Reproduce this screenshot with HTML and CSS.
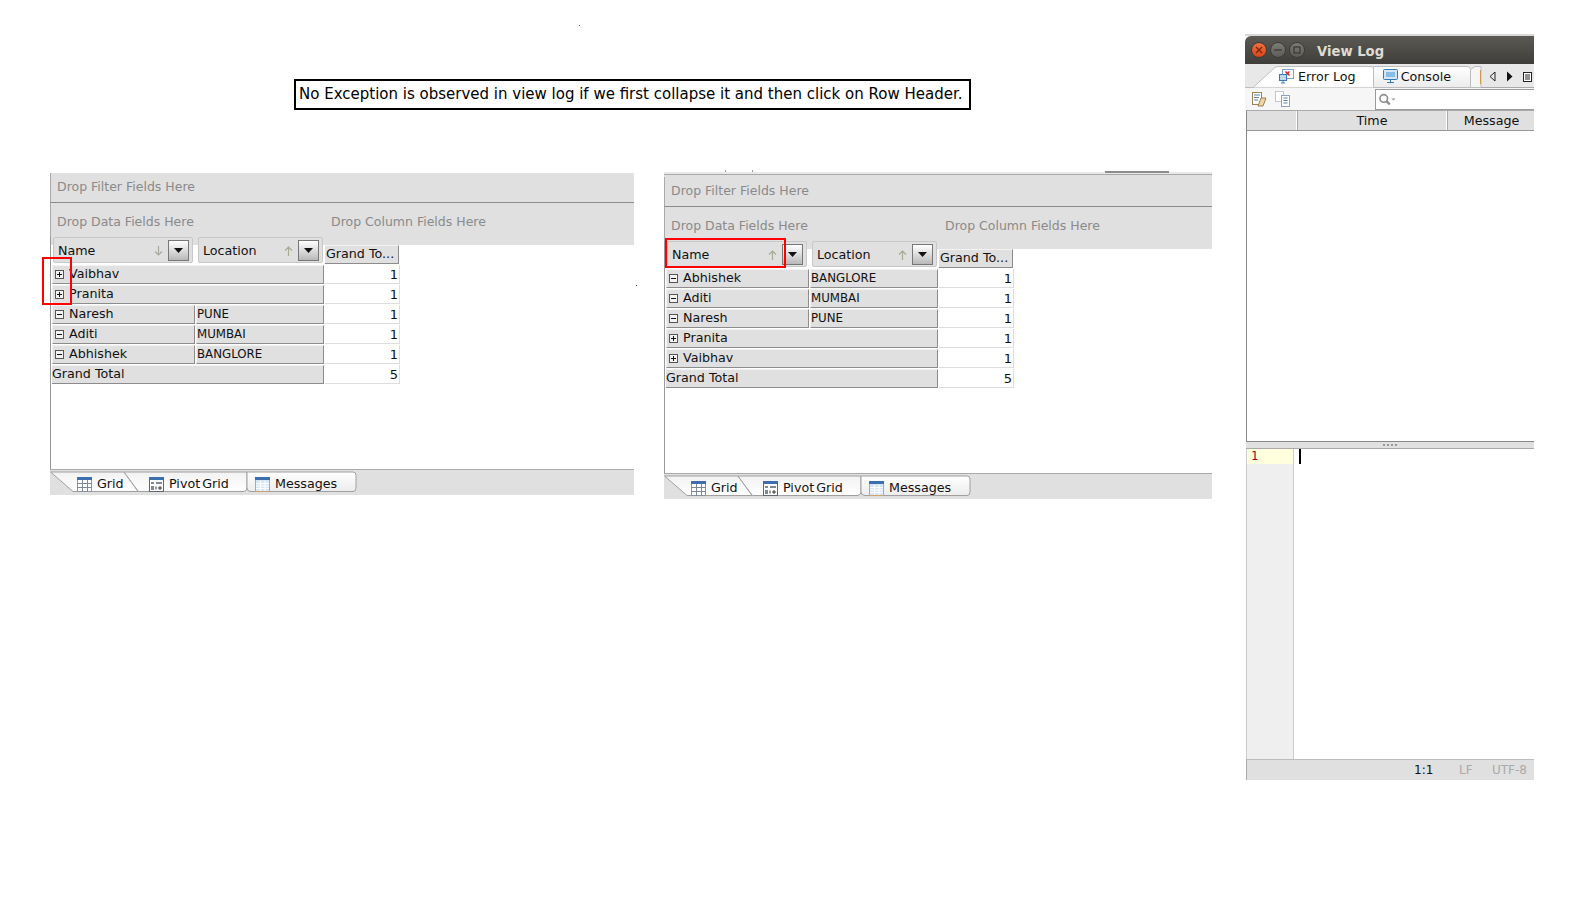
FILE: index.html
```html
<!DOCTYPE html>
<html lang="en">
<head>
<meta charset="utf-8">
<title>Pivot Grid collapse and View Log</title>
<link rel="stylesheet" href="styles.css">
</head>
<body>
<svg class="defs" width="0" height="0" aria-hidden="true">
  <defs>
    <linearGradient id="tabfill" x1="0" y1="0" x2="0" y2="1"><stop offset="0" stop-color="#f2f2f2"/><stop offset="1" stop-color="#ffffff"/></linearGradient>
    <linearGradient id="tabfill2" x1="0" y1="0" x2="0" y2="1"><stop offset="0" stop-color="#ffffff"/><stop offset="1" stop-color="#ececec"/></linearGradient>
    <symbol id="i-grid" viewBox="0 0 15 15">
      <rect x=".5" y=".5" width="14" height="14" fill="#fff" stroke="#8a94a6"/>
      <rect x="0" y="0" width="15" height="3" fill="#3d6fb0"/>
      <path d="M5.500 3v12M10.500 3v12M0 6.500h15M0 10.500h15" stroke="#7f8794" fill="none"/>
    </symbol>
    <symbol id="i-pivot" viewBox="0 0 15 15">
      <rect x=".5" y=".5" width="14" height="14" fill="#fff" stroke="#5f6774"/>
      <rect x="0" y="0" width="15" height="3" fill="#3d6fb0"/>
      <path d="M2 5h3v2H2zM2 9h3v4H2zM7 5h6v2H7z" fill="#7f8897"/>
      <path d="M9 11h4M11 9v4M7 9.500v3" stroke="#333" fill="none"/>
    </symbol>
    <symbol id="i-msg" viewBox="0 0 15 15">
      <rect x=".5" y=".5" width="14" height="14" fill="#d6e6f7" stroke="#d0a070"/>
      <rect x="0" y="0" width="15" height="3" fill="#3d6fb0"/>
      <path d="M5.500 4v10M10 4v10M1 6.500h13M1 9h13M1 11.500h13" stroke="#fff" fill="none"/>
    </symbol>
    <symbol id="i-plus" viewBox="0 0 9 9">
      <rect x=".5" y=".5" width="8" height="8" fill="#f2f2f2" stroke="#555"/>
      <path d="M2 4.500h5M4.500 2v5" stroke="#111" fill="none"/>
    </symbol>
    <symbol id="i-minus" viewBox="0 0 9 9">
      <rect x=".5" y=".5" width="8" height="8" fill="#f2f2f2" stroke="#555"/>
      <path d="M2 4.500h5" stroke="#111" fill="none"/>
    </symbol>
    <symbol id="i-up" viewBox="0 0 9 10">
      <path d="M4.500 10V1M1 4.500l3.500-3.500 3.500 3.500" stroke="#a9a994" fill="none" stroke-width="1.200"/>
    </symbol>
    <symbol id="i-down" viewBox="0 0 9 10">
      <path d="M4.500 0v9M1 5.500l3.500 3.500 3.500-3.500" stroke="#a9a9a0" fill="none" stroke-width="1.200"/>
    </symbol>
    <symbol id="i-tri" viewBox="0 0 9 5">
      <path d="M0 0h9L4.500 5z" fill="#111"/>
    </symbol>
    <symbol id="i-strip" viewBox="0 0 310 26">
      <path d="M.5 3L23 22.500H88L74 3Z" fill="url(#tabfill)" stroke="#a0a0a0"/>
      <path d="M74 3H197V19Q197 21.500 194 22.500H90Q88.500 22.500 88 22Z" fill="url(#tabfill)" stroke="#a0a0a0"/>
      <path d="M197 3H303Q306 3 306 6V19Q306 22.500 303 22.500H201Q197 22.500 197 19Z" fill="url(#tabfill2)" stroke="#a0a0a0"/>
    </symbol>
  </defs>
</svg>

<i class="speck speck-red"></i>
<i class="speck speck-dark"></i>

<p class="caption">No Exception is observed in view log if we first collapse it and then click on Row Header.</p>

<section class="pivot pivot-a">
  <div class="drop-filter">Drop Filter Fields Here</div>
  <div class="drop-row"><span class="drop-data">Drop Data Fields Here</span><span class="drop-col">Drop Column Fields Here</span></div>
  <div class="pivot-main">
    <div class="pgrid">
      <div class="field field-name"><span class="field-label">Name</span><svg class="sort"><use href="#i-down"/></svg><span class="drop-btn"><svg class="tri"><use href="#i-tri"/></svg></span></div>
      <div class="field field-loc"><span class="field-label">Location</span><svg class="sort"><use href="#i-up"/></svg><span class="drop-btn"><svg class="tri"><use href="#i-tri"/></svg></span></div>
      <div class="grand-head">Grand To...</div>

      <div class="cell span2"><svg class="tog"><use href="#i-plus"/></svg>Vaibhav</div><div class="val">1</div>
      <div class="cell span2"><svg class="tog"><use href="#i-plus"/></svg>Pranita</div><div class="val">1</div>
      <div class="cell"><svg class="tog"><use href="#i-minus"/></svg>Naresh</div><div class="cell loc">PUNE</div><div class="val">1</div>
      <div class="cell"><svg class="tog"><use href="#i-minus"/></svg>Aditi</div><div class="cell loc">MUMBAI</div><div class="val">1</div>
      <div class="cell"><svg class="tog"><use href="#i-minus"/></svg>Abhishek</div><div class="cell loc">BANGLORE</div><div class="val">1</div>
      <div class="cell span2 total">Grand Total</div><div class="val">5</div>
    </div>
  </div>
  <div class="tabs">
    <svg class="tabs-bg"><use href="#i-strip"/></svg>
    <span class="tab tab-grid"><svg class="tab-ic"><use href="#i-grid"/></svg>Grid</span>
    <span class="tab tab-pivot"><svg class="tab-ic"><use href="#i-pivot"/></svg>Pivot Grid</span>
    <span class="tab"><svg class="tab-ic"><use href="#i-msg"/></svg>Messages</span>
  </div>
  <i class="mark mark-a"></i>
</section>

<section class="pivot pivot-b">
  <i class="remnant"></i>
  <i class="tick tick-a"></i>
  <i class="tick tick-b"></i>
  <div class="top-band"></div>
  <div class="drop-filter">Drop Filter Fields Here</div>
  <div class="drop-row"><span class="drop-data">Drop Data Fields Here</span><span class="drop-col">Drop Column Fields Here</span></div>
  <div class="pivot-main">
    <div class="pgrid">
      <div class="field field-name"><span class="field-label">Name</span><svg class="sort"><use href="#i-up"/></svg><span class="drop-btn"><svg class="tri"><use href="#i-tri"/></svg></span></div>
      <div class="field field-loc"><span class="field-label">Location</span><svg class="sort"><use href="#i-up"/></svg><span class="drop-btn"><svg class="tri"><use href="#i-tri"/></svg></span></div>
      <div class="grand-head">Grand To...</div>

      <div class="cell"><svg class="tog"><use href="#i-minus"/></svg>Abhishek</div><div class="cell loc">BANGLORE</div><div class="val">1</div>
      <div class="cell"><svg class="tog"><use href="#i-minus"/></svg>Aditi</div><div class="cell loc">MUMBAI</div><div class="val">1</div>
      <div class="cell"><svg class="tog"><use href="#i-minus"/></svg>Naresh</div><div class="cell loc">PUNE</div><div class="val">1</div>
      <div class="cell span2"><svg class="tog"><use href="#i-plus"/></svg>Pranita</div><div class="val">1</div>
      <div class="cell span2"><svg class="tog"><use href="#i-plus"/></svg>Vaibhav</div><div class="val">1</div>
      <div class="cell span2 total">Grand Total</div><div class="val">5</div>
    </div>
  </div>
  <div class="tabs">
    <svg class="tabs-bg"><use href="#i-strip"/></svg>
    <span class="tab tab-grid"><svg class="tab-ic"><use href="#i-grid"/></svg>Grid</span>
    <span class="tab tab-pivot"><svg class="tab-ic"><use href="#i-pivot"/></svg>Pivot Grid</span>
    <span class="tab"><svg class="tab-ic"><use href="#i-msg"/></svg>Messages</span>
  </div>
  <i class="mark mark-b"></i>
</section>

<section class="log">
  <header class="log-title">
    <span class="wbtn wbtn-close"><svg viewBox="0 0 8 8"><path d="M1 1l6 6M7 1l-6 6" stroke="#7a2408" stroke-width="1.300" fill="none"/></svg></span>
    <span class="wbtn"><svg viewBox="0 0 8 8"><path d="M0 4h8" stroke="#3c3b37" stroke-width="1.300" fill="none"/></svg></span>
    <span class="wbtn"><svg viewBox="0 0 8 8"><rect x="1" y="1" width="6" height="6" stroke="#3c3b37" stroke-width="1.300" fill="none"/></svg></span>
    <span class="log-name">View Log</span>
  </header>
  <div class="log-tabs">
    <svg class="log-tabs-bg" viewBox="0 0 289 24">
      <path d="M0 23.500H8L30 3.500Q31.500 2.500 34 2.500H126Q128.500 2.500 128.500 5V23.500" fill="#fff" stroke="#bdbdbd"/>
      <path d="M128.500 2.500H222Q225.500 2.500 225.500 5.500V23.500H128.500Z" fill="url(#tabfill2)" stroke="#bdbdbd"/>
      <path d="M225.500 5.500L230 2.500H236V23.500H225.500Z" fill="#f6f6f6" stroke="#bdbdbd"/>
      <rect x="235" y="6" width="1" height="14" fill="#c89a5a"/>
    </svg>
    <span class="log-tab">
      <svg class="tab-ic" viewBox="0 0 15 15"><rect x="3.500" y=".5" width="11" height="9" fill="#fff" stroke="#7ea4cc"/><path d="M6.500 2.500l4 4M10.500 2.500l-4 4" stroke="#d8232a" stroke-width="1.500"/><rect x=".5" y="5.500" width="7" height="6" fill="#bcd7f0" stroke="#3d78b5"/><path d="M2 14h4M4 11.500V14" stroke="#3d78b5"/></svg>
      Error Log
    </span>
    <span class="log-tab">
      <svg class="tab-ic" viewBox="0 0 15 15"><rect x=".5" y=".5" width="14" height="10" rx="1" fill="#d3e6f7" stroke="#2f7ab8"/><rect x="3" y="3" width="9" height="5" fill="#88bde8"/><path d="M4 13.500h7M7.500 11v2" stroke="#2f7ab8"/></svg>
      Console
    </span>
    <span class="log-nav">
      <svg viewBox="0 0 7 11" class="nav-ic"><path d="M6 1v9L1 5.500z" fill="none" stroke="#222"/></svg>
      <svg viewBox="0 0 7 11" class="nav-ic"><path d="M1 .5v10l5.500-5z" fill="#111"/></svg>
      <svg viewBox="0 0 9 10" class="nav-menu"><rect x=".5" y=".5" width="8" height="9" fill="#fff" stroke="#222"/><path d="M2 3h5M2 5h5M2 7h5" stroke="#222"/></svg>
    </span>
  </div>
  <div class="log-tools">
    <svg class="tool" viewBox="0 0 16 16"><rect x="1.500" y="1.500" width="9" height="12" fill="#fff" stroke="#9c8250"/><path d="M3 4h6M3 6.500h5M3 9h4" stroke="#5f7fa6"/><path d="M7 15l3-8h5l-3 8z" fill="#f0d4a4" stroke="#9c8250"/></svg>
    <svg class="tool" viewBox="0 0 16 16"><rect x=".5" y=".5" width="8" height="10" fill="#fff" stroke="#c3c8d0"/><rect x="6.500" y="4.500" width="8" height="11" fill="#fff" stroke="#8ea2ba"/><path d="M8.500 7h4M8.500 9.500h4M8.500 12h4" stroke="#4a80ba"/></svg>
    <div class="search">
      <svg class="search-ic" viewBox="0 0 16 12"><circle cx="5" cy="5" r="3.500" fill="none" stroke="#8c8c8c" stroke-width="1.500"/><path d="M7.500 7.500l3 3" stroke="#8c8c8c" stroke-width="2"/><path d="M12 5h4l-2 2z" fill="#9a9a9a"/></svg>
    </div>
  </div>
  <div class="log-head">
    <span class="lh lh-a"></span><span class="lh lh-b">Time</span><span class="lh lh-c">Message</span>
  </div>
  <div class="log-body"></div>
  <div class="splitter"><span class="grip"></span></div>
  <div class="editor">
    <div class="gutter"><div class="lineno">1</div></div>
    <div class="code"><i class="caret"></i></div>
  </div>
  <footer class="status"><span class="st-pos">1:1</span><span class="st-dim st-lf">LF</span><span class="st-dim">UTF-8</span></footer>
</section>
</body>
</html>
```

FILE: styles.css
```css
* { box-sizing: border-box; }
html, body { margin: 0; padding: 0; background: #fff; }
body {
  position: relative;
  width: 1580px;
  height: 912px;
  overflow: hidden;
  font-family: "DejaVu Sans", sans-serif;
  font-size: 12.7px;
  color: #111;
}
.defs { position: absolute; }

.speck { position: absolute; width: 1px; height: 1px; }
.speck-red { left: 579px; top: 25px; background: #c33; }
.speck-dark { left: 636px; top: 285px; background: #333; }

.caption {
  position: absolute;
  left: 294px;
  top: 79px;
  width: 677px;
  height: 31px;
  margin: 0;
  border: 2px solid #000;
  padding-left: 3px;
  font-size: 15px;
  line-height: 26px;
  color: #000;
  white-space: nowrap;
}

.pivot {
  position: absolute;
  display: flex;
  flex-direction: column;
  color: #111;
}
.pivot-a { left: 50px; top: 173px; width: 584px; height: 322px; }
.pivot-b { left: 664px; top: 172px; width: 548px; height: 327px; }

.top-band {
  height: 5px;
  flex: none;
  background: linear-gradient(#e9e9e9 2px, #a8a8a8 2px, #a8a8a8 3px, #e0e0e0 3px);
}

.drop-filter {
  height: 30px;
  flex: none;
  padding-left: 6px;
  background: #e0e0e0;
  border-left: 1px solid #aaa;
  border-bottom: 1px solid #8c8c8c;
  color: #8a8a8a;
  font-size: 12.5px;
  line-height: 27px;
}
.drop-row {
  height: 34px;
  flex: none;
  display: flex;
  padding-left: 6px;
  background: #e0e0e0;
  border-left: 1px solid #aaa;
  color: #8a8a8a;
  font-size: 12.5px;
  line-height: 37px;
}
.drop-data { width: 274px; }

.pivot-main {
  flex: 1;
  padding-left: 1px;
  border-left: 1px solid #999;
  border-bottom: 1px solid #aaa;
  background: linear-gradient(#e0e0e0 8px, #fff 8px);
}
.pgrid {
  display: grid;
  grid-template-columns: 143px 128px 75px;
  grid-auto-rows: 19px;
  grid-template-rows: 27px;
  gap: 1px;
  width: 348px;
}

.field {
  height: 26px;
  margin-left: 1px;
  margin-right: 2px;
  display: flex;
  align-items: center;
  background: #e0e0e0;
  border: 1px solid #c8c8c8;
  border-radius: 2px;
}
.field-loc { margin-left: 2px; margin-right: 1px; }
.field-label { flex: 1; padding: 1px 0 0 4px; line-height: 24px; }
.sort { width: 9px; height: 10px; margin-right: 5px; margin-top: 2px; }
.drop-btn {
  width: 21px;
  height: 21px;
  margin-right: 3px;
  display: flex;
  align-items: center;
  justify-content: center;
  border: 1px solid #777;
  background: linear-gradient(#fff, #b9b9b9);
}
.tri { width: 9px; height: 5px; }

.grand-head {
  height: 19px;
  align-self: end;
  margin-right: 1px;
  padding-left: 1px;
  background: #e0e0e0;
  border-right: 1px solid #8c8c8c;
  border-bottom: 1px solid #8c8c8c;
  border-top: 1px solid #f2f2f2;
  line-height: 15px;
  white-space: nowrap;
}

.cell {
  display: flex;
  align-items: center;
  padding: 0 0 2px 2px;
  background: #e0e0e0;
  border-top: 1px solid #f2f2f2;
  border-left: 1px solid #f2f2f2;
  border-right: 1px solid #8c8c8c;
  border-bottom: 1px solid #8c8c8c;
  line-height: 15px;
  white-space: nowrap;
}
.span2 { grid-column: span 2; }
.loc { padding: 0; font-size: 11.8px; }
.total { padding-left: 0; border-left: 0; }
.tog { width: 9px; height: 9px; margin: 2px 5px 0 0; flex: none; }

.val {
  padding-right: 1px;
  text-align: right;
  background: #fff;
  border-right: 1px solid #ddd;
  border-bottom: 1px solid #ddd;
  font-size: 13px;
  line-height: 19px;
}

.tabs {
  position: relative;
  height: 25px;
  flex: none;
  display: flex;
  align-items: center;
  gap: 27px;
  padding-left: 27px;
  padding-top: 3px;
  background: #e0e0e0;
}
.tabs-bg {
  position: absolute;
  left: 0;
  top: -1px;
  width: 310px;
  height: 26px;
}
.tab {
  position: relative;
  display: flex;
  align-items: center;
  gap: 5px;
  white-space: nowrap;
  line-height: 18px;
}
.tab-grid { width: 45px; }
.tab-pivot { width: 79px; word-spacing: -2px; }
.tab-ic { width: 15px; height: 15px; flex: none; }

.mark {
  position: absolute;
  border: 2px solid #f00;
}
.mark-a { left: -8px; top: 84px; width: 30px; height: 48px; }
.mark-b { left: 1px; top: 66px; width: 121px; height: 30px; }
.remnant {
  position: absolute;
  left: 441px;
  top: -1px;
  width: 64px;
  height: 2px;
  background: #8c8c8c;
}
.tick {
  position: absolute;
  top: -2px;
  width: 1px;
  height: 2px;
  background: #999;
}
.tick-a { left: 61px; }
.tick-b { left: 88px; }

.log {
  position: absolute;
  left: 1245px;
  top: 34px;
  width: 289px;
  height: 746px;
  display: flex;
  flex-direction: column;
  border-top: 2px solid #d9d9d9;
}
.log-title {
  height: 28px;
  flex: none;
  display: flex;
  align-items: center;
  padding-left: 6px;
  gap: 3px;
  background: linear-gradient(#5b5954, #3f3e3a);
  border-top-left-radius: 6px;
}
.wbtn {
  width: 16px;
  height: 16px;
  display: flex;
  align-items: center;
  justify-content: center;
  border-radius: 50%;
  background: linear-gradient(#7d7b76, #5e5c58);
  border: 1px solid #3c3b37;
}
.wbtn svg { width: 8px; height: 8px; }
.wbtn-close { background: linear-gradient(#f0703f, #d9441a); }
.log-name {
  margin: 4px 0 0 9px;
  font-size: 13.2px;
  font-weight: 700;
  color: #dfdbd2;
  line-height: 20px;
}

.log-tabs {
  position: relative;
  height: 24px;
  flex: none;
  display: flex;
  align-items: center;
  gap: 27px;
  padding-left: 34px;
  padding-top: 2px;
  background: #e8e8e8;
  border-bottom: 1px solid #aaa;
}
.log-tabs-bg { position: absolute; left: 0; top: 0; width: 289px; height: 24px; }
.log-tab {
  position: relative;
  display: flex;
  align-items: center;
  gap: 3px;
  white-space: nowrap;
}
.log-tab:first-of-type { gap: 4px; }
.log-nav {
  position: absolute;
  right: 2px;
  top: 7px;
  display: flex;
  align-items: center;
  gap: 10px;
}
.nav-ic { width: 7px; height: 11px; }
.nav-menu { width: 9px; height: 10px; }

.log-tools {
  height: 22px;
  flex: none;
  display: flex;
  align-items: center;
  padding-left: 6px;
  gap: 8px;
  background: #f6f6f6;
}
.tool { width: 16px; height: 16px; flex: none; }
.search {
  flex: 1;
  height: 21px;
  margin-left: 76px;
  padding: 3px 0 0 2px;
  background: #fff;
  border: 1px solid #999;
  border-right: 0;
}
.search-ic { display: block; width: 18px; height: 13px; }

.log-head {
  height: 21px;
  flex: none;
  display: flex;
  margin-left: 1px;
  background: #e0e0e0;
  border-left: 1px solid #888;
  border-bottom: 1px solid #999;
  border-top: 1px solid #aaa;
}
.lh {
  text-align: center;
  line-height: 20px;
  border-right: 1px solid #fff;
  box-shadow: 1px 0 0 #aaa;
}
.lh-a { width: 50px; }
.lh-b { width: 150px; padding-left: 1px; }
.lh-c { flex: 1; padding-left: 2px; border-right: 0; box-shadow: none; }

.log-body {
  flex: 1;
  margin-left: 1px;
  background: #fff;
  border-left: 1px solid #888;
  border-bottom: 1px solid #888;
}
.splitter {
  height: 7px;
  flex: none;
  display: flex;
  align-items: center;
  justify-content: center;
  margin-left: 1px;
  background: #e0e0e0;
  border-bottom: 1px solid #aaa;
}
.grip {
  width: 15px;
  height: 2px;
  background: repeating-linear-gradient(90deg, #999 0 2px, transparent 2px 4px);
}

.editor {
  height: 310px;
  flex: none;
  display: flex;
  background: #fff;
}
.gutter {
  width: 48px;
  margin-left: 1px;
  background: #efefef;
  border-left: 1px solid #ccc;
  border-right: 1px solid #ccc;
}
.lineno {
  height: 15px;
  padding-left: 4px;
  background: #ffffdd;
  color: #a0002a;
  font-family: "DejaVu Sans Mono", monospace;
  font-size: 12px;
  line-height: 15px;
}
.code { flex: 1; padding-left: 5px; }
.caret { display: block; width: 2px; height: 15px; background: #000; }

.status {
  height: 21px;
  flex: none;
  display: flex;
  align-items: center;
  margin-left: 1px;
  padding-left: 167px;
  background: #e0e0e0;
  border-top: 1px solid #bbb;
  border-left: 1px solid #aaa;
  font-size: 12px;
}
.st-pos { width: 45px; color: #111; }
.st-dim { color: #aaa; }
.st-lf { width: 33px; }
```
